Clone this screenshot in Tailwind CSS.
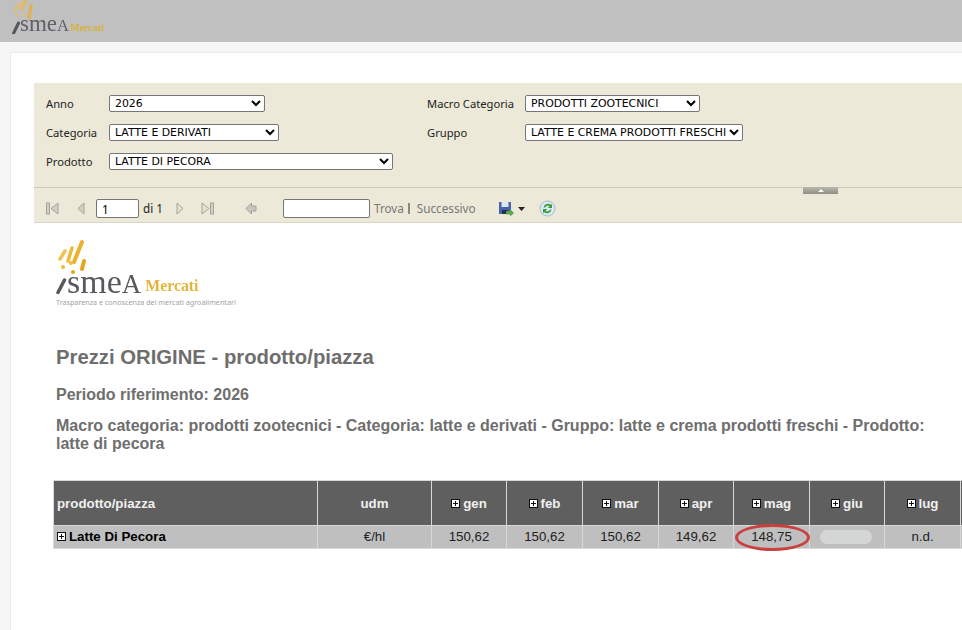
<!DOCTYPE html>
<html lang="it">
<head>
  <meta charset="UTF-8" />
  <title>Ismea Mercati</title>
  <script src="https://cdn.jsdelivr.net/npm/@tailwindcss/browser@4"></script>
</head>
<body class="w-[962px] h-[630px] overflow-hidden bg-[#f6f6f6] font-['Liberation_Sans',sans-serif]">

  <!-- Top bar -->
  <header class="h-[42px] bg-[#c0c0c0] pl-[12px] overflow-hidden">
    <svg class="w-[22px] h-[19px] block blur-[0.5px]" viewBox="0 0 22 19" fill="none" stroke-linecap="round">
      <path d="M3 10 L9 3" stroke="#dfbd72" stroke-width="3"/>
      <path d="M10 9 L15 -3" stroke="#dfb964" stroke-width="3"/>
      <path d="M17 18 L19 6" stroke="#ddb358" stroke-width="3.500"/>
      <circle cx="5" cy="15" r="1.500" fill="#dfbd72"/>
      <circle cx="12" cy="15" r="1.500" fill="#dfbd72"/>
    </svg>
    <div class="flex items-end h-[15px] blur-[0.4px] font-['Liberation_Serif',serif]">
      <svg class="w-[8px] h-[13px] shrink-0" viewBox="0 0 8 13"><path d="M1.500 12.500 L6.500 2" stroke="#55555c" stroke-width="3" stroke-linecap="round"/></svg>
      <span class="text-[23px] leading-[16px] text-[#5f5f66]">sme<span class="text-[16.5px]">A</span></span>
      <span class="ml-[1px] text-[10px] leading-[12px] font-bold text-[#d9b13a]">Mercati</span>
    </div>
  </header>

  <!-- Panel -->
  <main class="mt-[10px] ml-[10px] h-[578px] bg-white border-t border-l border-[#ebebeb] pl-[23px] pt-[30px]">

    <!-- Parameters -->
    <section class="bg-[#ece9d8] h-[105px] border-b border-[#cdc9b8] relative font-['Noto_Sans',sans-serif] text-[11.2px] text-[#222] pt-[12px] pl-[12px]">
      <div class="flex items-center h-[17px]">
        <label class="w-[63px] pt-[1px]">Anno</label>
        <select class="w-[156px] h-[17px] bg-white border border-[#767676] rounded-[2px] pl-[1px] font-['DejaVu_Sans',sans-serif] text-[10.900px] text-black"><option>2026</option></select>
        <label class="ml-[162px] w-[98px] pt-[1px]">Macro Categoria</label>
        <select class="w-[175px] h-[17px] bg-white border border-[#767676] rounded-[2px] pl-[1px] font-['DejaVu_Sans',sans-serif] text-[10.900px] text-black"><option>PRODOTTI ZOOTECNICI</option></select>
      </div>
      <div class="flex items-center h-[17px] mt-[12px]">
        <label class="w-[63px] pt-[1px]">Categoria</label>
        <select class="w-[170px] h-[17px] bg-white border border-[#767676] rounded-[2px] pl-[1px] font-['DejaVu_Sans',sans-serif] text-[10.900px] text-black"><option>LATTE E DERIVATI</option></select>
        <label class="ml-[148px] w-[98px] pt-[1px]">Gruppo</label>
        <select class="w-[218px] h-[17px] bg-white border border-[#767676] rounded-[2px] pl-[1px] font-['DejaVu_Sans',sans-serif] text-[10.900px] text-black"><option>LATTE E CREMA PRODOTTI FRESCHI</option></select>
      </div>
      <div class="flex items-center h-[17px] mt-[12px]">
        <label class="w-[63px] pt-[1px]">Prodotto</label>
        <select class="w-[284px] h-[17px] bg-white border border-[#767676] rounded-[2px] pl-[1px] font-['DejaVu_Sans',sans-serif] text-[10.900px] text-black"><option>LATTE DI PECORA</option></select>
      </div>
      <!-- collapse handle -->
      <div class="absolute left-[769px] top-[104px] w-[35px] h-[7px] bg-gradient-to-b from-[#b9b8ad] to-[#8f8f86] flex justify-center items-center">
        <div class="w-0 h-0 border-x-[3px] border-x-transparent border-b-[3px] border-b-white"></div>
      </div>
    </section>

    <!-- Toolbar -->
    <section class="bg-[#ece9d8] h-[35px] border-b border-[#d8d6ca] flex items-center pl-[12px] pt-[7px] font-['Noto_Sans',sans-serif] text-[11.7px] text-[#222]">
      <svg class="w-[13px] h-[13px] shrink-0" viewBox="0 0 13 13"><rect x="0.500" y="1" width="3" height="11" fill="#d2d0c4" stroke="#a3a39b"/><path d="M12 1 L5 6.500 L12 12Z" fill="#d2d0c4" stroke="#a3a39b"/></svg>
      <svg class="ml-[17px] w-[10px] h-[13px] shrink-0" viewBox="0 0 10 13"><path d="M8 1 L2 6.500 L8 12Z" fill="#d2d0c4" stroke="#a3a39b"/></svg>
      <input value="1" class="ml-[10px] w-[43px] h-[19px] bg-white border border-[#767676] rounded-[2px] px-[5px] text-[11.7px] text-black" />
      <span class="ml-[4px] w-[32px]">di 1</span>
      <svg class="w-[10px] h-[13px] shrink-0" viewBox="0 0 10 13"><path d="M2 1 L8 6.500 L2 12Z" fill="#e3e1d3" stroke="#a3a39b"/></svg>
      <svg class="ml-[16px] w-[13px] h-[13px] shrink-0" viewBox="0 0 13 13"><path d="M1 1 L8 6.500 L1 12Z" fill="#e3e1d3" stroke="#a3a39b"/><rect x="9.500" y="1" width="3" height="11" fill="#d2d0c4" stroke="#a3a39b"/></svg>
      <svg class="ml-[31px] w-[13px] h-[13px] shrink-0" viewBox="0 0 13 13"><path d="M1 6.500 L6.500 1 V4 H11 V9 H6.500 V12Z" fill="#c6c6bc" stroke="#a3a39b"/></svg>
      <input class="ml-[25px] w-[87px] h-[19px] bg-white border border-[#767676] rounded-[2px]" />
      <span class="ml-[4px] text-[#777]">Trova</span>
      <span class="ml-[4px] w-[2px] h-[11px] bg-[#8a8a80]"></span>
      <span class="ml-[7px] text-[#777]">Successivo</span>
      <svg class="ml-[22px] w-[16px] h-[16px] shrink-0" viewBox="0 0 16 16"><rect x="1" y="1" width="12" height="12" fill="#4a63a8"/><rect x="3.500" y="1" width="7" height="5" fill="#dfe6f3"/><rect x="4" y="9" width="6" height="4" fill="#26304f"/><path d="M8 10 H12 V8 L16 12 L12 15.500 V13.500 H8Z" fill="#5aa84a"/></svg>
      <svg class="ml-[4px] w-[7px] h-[4px] shrink-0" viewBox="0 0 7 4"><path d="M0 0 H7 L3.500 4Z" fill="#222"/></svg>
      <svg class="ml-[14px] w-[17px] h-[17px] shrink-0" viewBox="0 0 17 17"><circle cx="8.500" cy="8.500" r="7.500" fill="#dcebf0" stroke="#9fbccb"/><path d="M4.500 7.500 A4.500 4.500 0 0 1 12 5 L13 3.500 V8 H8.800 L10.500 6.300 A2.800 2.800 0 0 0 6 7.500Z" fill="#3c9a42"/><path d="M12.500 9.500 A4.500 4.500 0 0 1 5 12 L4 13.500 V9 H8.200 L6.500 10.700 A2.800 2.800 0 0 0 11 9.500Z" fill="#3c9a42"/></svg>
    </section>

    <!-- Report -->
    <section class="pl-[22px] pt-[17px] text-[#6e6e6e] font-bold">
      <!-- Report logo -->
      <div class="h-[65px] w-[182px]">
        <svg class="w-[32px] h-[38px] block ml-[1px] blur-[0.4px]" viewBox="0 0 32 38" fill="none" stroke-linecap="round">
          <path d="M3 19 L8 11" stroke="#f0c252" stroke-width="3.500"/>
          <path d="M11 21 L15 8" stroke="#efb93a" stroke-width="3.500"/>
          <path d="M17 22 L25 2" stroke="#edb02c" stroke-width="4"/>
          <path d="M25 29 L27 21" stroke="#e8a420" stroke-width="4"/>
          <circle cx="6" cy="27" r="2" fill="#efb93a"/>
          <circle cx="14" cy="23" r="2" fill="#efb93a"/>
          <circle cx="16" cy="32" r="2" fill="#e8a420"/>
        </svg>
        <div class="flex items-end h-[16px] blur-[0.3px] font-normal font-['Liberation_Serif',serif]">
          <svg class="w-[11px] h-[16px] shrink-0" viewBox="0 0 11 16"><path d="M2 14.500 L8.500 2" stroke="#58585e" stroke-width="3.500" stroke-linecap="round"/></svg>
          <span class="text-[34px] leading-[20px] text-[#58585e]">sme<span class="text-[27px]">A</span></span>
          <span class="ml-[4px] text-[15.800px] leading-[16px] font-bold text-[#e3b53a]">Mercati</span>
        </div>
        <p class="mt-[3px] text-[7.200px] leading-[10px] font-normal text-[#a2a2a2] whitespace-nowrap font-['Noto_Sans',sans-serif]">Trasparenza e conoscenza dei mercati agroalimentari</p>
      </div>

      <h1 class="mt-[41px] text-[20.300px] leading-[22px]">Prezzi ORIGINE - prodotto/piazza</h1>
      <h2 class="mt-[16px] text-[16px] leading-[22px]">Periodo riferimento: 2026</h2>
      <h2 class="mt-[11px] w-[880px] text-[16px] leading-[18px]">Macro categoria: prodotti zootecnici - Categoria: latte e derivati - Gruppo: latte e crema prodotti freschi - Prodotto: latte di pecora</h2>

      <!-- Table -->
      <table class="mt-[27px] -ml-[3px] w-[937px] table-fixed border-collapse text-[13.300px]">
        <colgroup>
          <col class="w-[264px]" /><col class="w-[114px]" /><col class="w-[75px]" /><col class="w-[76px]" /><col class="w-[76px]" /><col class="w-[75px]" /><col class="w-[76px]" /><col class="w-[75px]" /><col class="w-[76px]" /><col class="w-[30px]" />
        </colgroup>
        <thead>
          <tr class="h-[45px] bg-[#5f5f5f] text-[#f0f0f0]">
            <th class="border border-[#d8d8d8] text-left pl-[3px] pt-[2px]">prodotto/piazza</th>
            <th class="border border-[#d8d8d8] pt-[2px]">udm</th>
            <th class="border border-[#d8d8d8] pt-[2px]"><span class="inline-flex items-center gap-[3px]"><svg class="w-[9px] h-[9px]" viewBox="0 0 9 9"><rect x="0.500" y="0.500" width="8" height="8" fill="#fff" stroke="#111"/><path d="M2 4.500 H7 M4.500 2 V7" stroke="#111"/></svg>gen</span></th>
            <th class="border border-[#d8d8d8] pt-[2px]"><span class="inline-flex items-center gap-[3px]"><svg class="w-[9px] h-[9px]" viewBox="0 0 9 9"><rect x="0.500" y="0.500" width="8" height="8" fill="#fff" stroke="#111"/><path d="M2 4.500 H7 M4.500 2 V7" stroke="#111"/></svg>feb</span></th>
            <th class="border border-[#d8d8d8] pt-[2px]"><span class="inline-flex items-center gap-[3px]"><svg class="w-[9px] h-[9px]" viewBox="0 0 9 9"><rect x="0.500" y="0.500" width="8" height="8" fill="#fff" stroke="#111"/><path d="M2 4.500 H7 M4.500 2 V7" stroke="#111"/></svg>mar</span></th>
            <th class="border border-[#d8d8d8] pt-[2px]"><span class="inline-flex items-center gap-[3px]"><svg class="w-[9px] h-[9px]" viewBox="0 0 9 9"><rect x="0.500" y="0.500" width="8" height="8" fill="#fff" stroke="#111"/><path d="M2 4.500 H7 M4.500 2 V7" stroke="#111"/></svg>apr</span></th>
            <th class="border border-[#d8d8d8] pt-[2px]"><span class="inline-flex items-center gap-[3px]"><svg class="w-[9px] h-[9px]" viewBox="0 0 9 9"><rect x="0.500" y="0.500" width="8" height="8" fill="#fff" stroke="#111"/><path d="M2 4.500 H7 M4.500 2 V7" stroke="#111"/></svg>mag</span></th>
            <th class="border border-[#d8d8d8] pt-[2px]"><span class="inline-flex items-center gap-[3px]"><svg class="w-[9px] h-[9px]" viewBox="0 0 9 9"><rect x="0.500" y="0.500" width="8" height="8" fill="#fff" stroke="#111"/><path d="M2 4.500 H7 M4.500 2 V7" stroke="#111"/></svg>giu</span></th>
            <th class="border border-[#d8d8d8] pt-[2px]"><span class="inline-flex items-center gap-[3px]"><svg class="w-[9px] h-[9px]" viewBox="0 0 9 9"><rect x="0.500" y="0.500" width="8" height="8" fill="#fff" stroke="#111"/><path d="M2 4.500 H7 M4.500 2 V7" stroke="#111"/></svg>lug</span></th>
            <th class="border border-[#d8d8d8]"></th>
          </tr>
        </thead>
        <tbody>
          <tr class="h-[23px] bg-[#bfbfbf] text-[#222] font-normal text-center">
            <td class="border border-[#d8d8d8] text-left pl-[3px] font-bold text-black"><span class="inline-flex items-center gap-[3px]"><svg class="w-[9px] h-[9px]" viewBox="0 0 9 9"><rect x="0.500" y="0.500" width="8" height="8" fill="#fff" stroke="#111"/><path d="M2 4.500 H7 M4.500 2 V7" stroke="#111"/></svg>Latte Di Pecora</span></td>
            <td class="border border-[#d8d8d8]">€/hl</td>
            <td class="border border-[#d8d8d8]">150,62</td>
            <td class="border border-[#d8d8d8]">150,62</td>
            <td class="border border-[#d8d8d8]">150,62</td>
            <td class="border border-[#d8d8d8]">149,62</td>
            <td class="border border-[#d8d8d8] relative">148,75
              <div class="absolute left-[1px] -top-[2px] w-[75px] h-[27px] rounded-[50%] border-[3px] border-[#c9403f]"></div>
            </td>
            <td class="border border-[#d8d8d8] relative">
              <div class="absolute left-[10px] top-[4px] w-[52px] h-[14px] rounded-full bg-[#d4d6d6] blur-[0.5px]"></div>
            </td>
            <td class="border border-[#d8d8d8]">n.d.</td>
            <td class="border border-[#d8d8d8]"></td>
          </tr>
        </tbody>
      </table>
    </section>
  </main>
</body>
</html>
